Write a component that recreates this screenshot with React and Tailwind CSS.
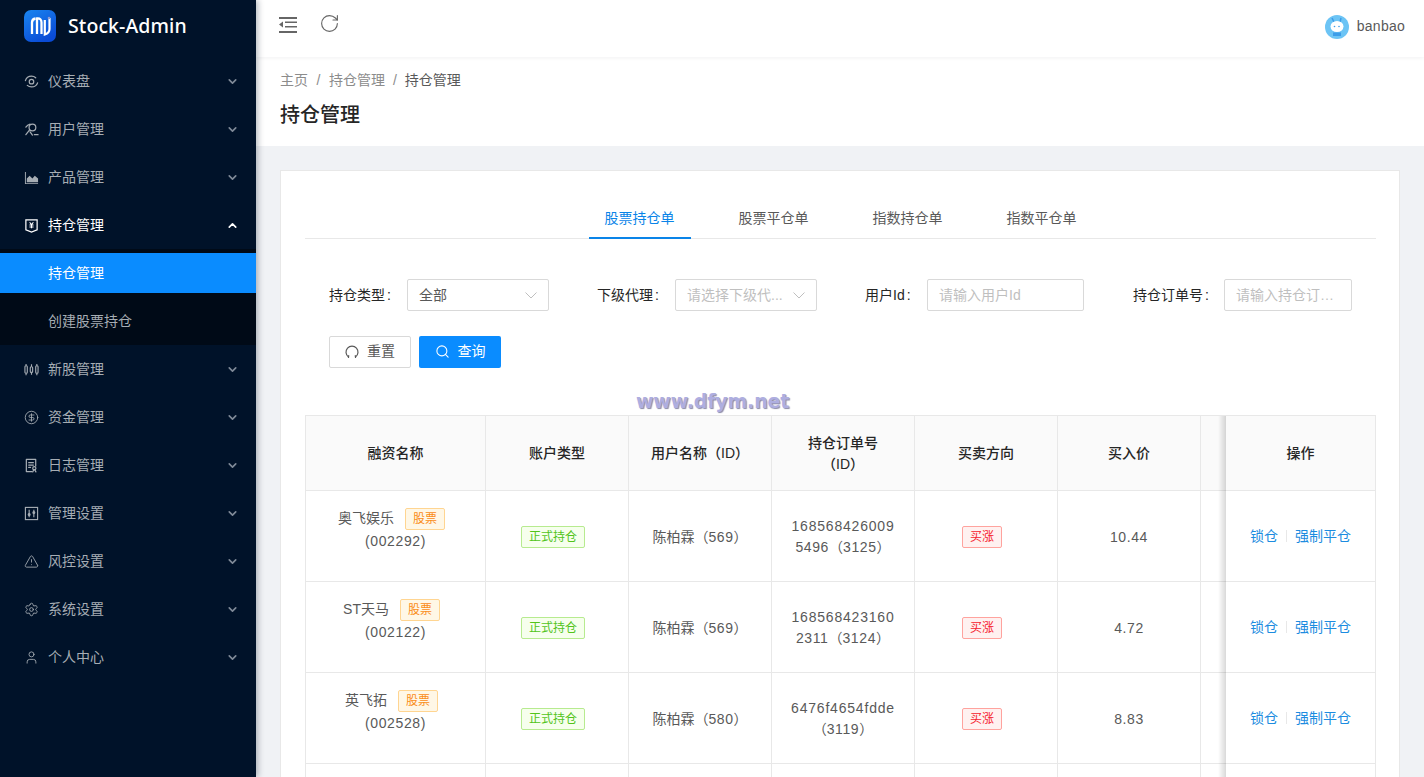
import React from 'react';
import { ChevronDown, ChevronUp, CircleDollarSign, TriangleAlert, Settings, User, RotateCw, Search } from 'lucide-react';

const Svg = ({ children }) => (
  <svg width="15" height="15" viewBox="0 0 16 16" fill="none" stroke="currentColor" strokeWidth="1.3" strokeLinecap="round" strokeLinejoin="round">
    {children}
  </svg>
);

const DashIcon = () => (
  <Svg>
    <circle cx="8" cy="8.2" r="2.4" />
    <path d="M1.500 7C2.500 3.800 5.500 2.300 8 2.300c1.500 0 3.200 .5 4.500 1.700" />
    <path d="M14.500 9.500c-1 3-4 4.300-6.500 4.300-1.500 0-3.200-.5-4.500-1.700" />
  </Svg>
);
const UserSearchIcon = () => (
  <Svg>
    <circle cx="9" cy="5.800" r="3.600" />
    <path d="M6 8.500 2 13.500M6.500 2.300C4.500 2.800 3 4 2 5.500M6.500 10.500l2.500 3.500M11 13.500h4" />
  </Svg>
);
const AreaIcon = () => (
  <svg width="15" height="15" viewBox="0 0 16 16" fill="currentColor">
    <path d="M1 2h1v12h13v1H1z" />
    <path d="M3 13V9l3-3 3 3 2.500-3 3.500 3v4z" />
  </svg>
);
const ShieldIcon = () => (
  <svg width="15" height="15" viewBox="0 0 16 16" fill="none" stroke="currentColor" strokeWidth="1.3">
    <path d="M2 2h12v10.500l-6 2.500-6-2.500z" />
    <path d="M6 4.500l2 2.500 2-2.500M5.800 7.500h4.400M5.800 9.500h4.400M8 7v4" strokeWidth="1.100" />
  </svg>
);
const CandleIcon = () => (
  <svg width="15" height="15" viewBox="0 0 16 16" fill="none" stroke="currentColor" strokeWidth="1.2">
    <rect x="1" y="4" width="2.500" height="8" rx="1" />
    <rect x="6.700" y="5" width="2.500" height="6" rx="1" />
    <rect x="12.500" y="4" width="2.500" height="8" rx="1" />
    <path d="M2.200 2v2M2.200 12v2M8 2.500V5M8 11v2.500M13.700 2v2M13.700 12v2" />
  </svg>
);
const LogIcon = () => (
  <Svg>
    <path d="M8.500 14.500H2.500v-13h10v7" />
    <path d="M5 5h5M5 7.500h5M5 10h2" />
    <circle cx="11" cy="11" r="1.700" />
    <path d="M9.300 14.800l1.200-2.200M12.700 14.800l-1.200-2.200" />
  </Svg>
);
const SlidersIcon = () => (
  <svg width="15" height="15" viewBox="0 0 16 16" fill="none" stroke="currentColor" strokeWidth="1.200">
    <rect x="1.500" y="1.500" width="13" height="13" />
    <path d="M5.500 4v8M10.500 4v8" />
    <circle cx="5.500" cy="9" r="1" fill="currentColor" />
    <circle cx="10.500" cy="7" r="1" fill="currentColor" />
  </svg>
);

const menu = [
  { name: '仪表盘', icon: <DashIcon /> },
  { name: '用户管理', icon: <UserSearchIcon /> },
  { name: '产品管理', icon: <AreaIcon /> },
  { name: '持仓管理', icon: <ShieldIcon />, open: true },
  { name: '新股管理', icon: <CandleIcon /> },
  { name: '资金管理', icon: <CircleDollarSign size={15} strokeWidth={1.4} /> },
  { name: '日志管理', icon: <LogIcon /> },
  { name: '管理设置', icon: <SlidersIcon /> },
  { name: '风控设置', icon: <TriangleAlert size={15} strokeWidth={1.4} /> },
  { name: '系统设置', icon: <Settings size={15} strokeWidth={1.4} /> },
  { name: '个人中心', icon: <User size={15} strokeWidth={1.4} /> },
];

const rows = [
  { name: '奥飞娱乐', code: '(002292)', user: '陈柏霖', uid: '569', order: ['168568426009', '5496', '3125'], price: '10.44' },
  { name: 'ST天马', code: '(002122)', user: '陈柏霖', uid: '569', order: ['168568423160', '2311', '3124'], price: '4.72' },
  { name: '英飞拓', code: '(002528)', user: '陈柏霖', uid: '580', order: ['6476f4654fdde', '', '3119'], price: '8.83' },
  { name: '奥飞娱乐', code: '(002292)', user: '陈柏霖', uid: '569', order: ['168568420011', '2301', '3118'], price: '10.44' },
];

const Num = ({ children }) => <span className="tracking-[0.6px]">{children}</span>;

function Sidebar() {
  return (
    <aside className="w-[256px] shrink-0 h-full bg-[#001229] z-10 shadow-[2px_0_6px_rgba(0,21,41,0.3)]">
      <div className="h-[57px] flex items-center pl-[24px] pb-[5px]">
        <svg width="32" height="32" viewBox="0 0 32 32">
          <defs>
            <linearGradient id="logo" x1="0" y1="0" x2="0.6" y2="1">
              <stop offset="0" stopColor="#1a86f0" />
              <stop offset="1" stopColor="#0a4bd6" />
            </linearGradient>
          </defs>
          <rect width="32" height="32" rx="7" fill="url(#logo)" />
          <path d="M8 24V12.500Q8 9 11.500 8.500M13 24V8.500Q17.500 8 17.500 12.500V24" fill="none" stroke="#fff" strokeWidth="2.300" />
          <path d="M20.800 10V24.500Q25.500 23 25.500 19V8" fill="none" stroke="#fff" strokeWidth="2.200" />
          <circle cx="25" cy="8" r="1.300" fill="#8e9bd0" />
        </svg>
        <span className="ml-[12px] text-[19.5px] font-medium text-white tracking-[0.1px] font-['Noto_Sans',sans-serif]">Stock-Admin</span>
      </div>
      {menu.map((m) => (
        <div key={m.name}>
          <div className={`h-[48px] flex items-center pl-[24px] pr-[17px] ${m.open ? 'text-white' : 'text-[#a6adb4]'}`}>
            <span className="w-[24px] shrink-0 flex">{m.icon}</span>
            <span className="flex-1 text-[14px]">{m.name}</span>
            {m.open
              ? <ChevronUp size={13} strokeWidth={3} className="text-white" />
              : <ChevronDown size={13} strokeWidth={3} className="text-[#7f8a98]" />}
          </div>
          {m.open && (
            <div className="bg-[#000a17] pt-[4px] pb-[4px] text-[14px]">
              <div className="h-[40px] flex items-center pl-[48px] bg-[#0a8cff] text-white">持仓管理</div>
              <div className="h-[40px] mt-[8px] flex items-center pl-[48px] text-[#a6adb4]">创建股票持仓</div>
            </div>
          )}
        </div>
      ))}
    </aside>
  );
}

function Header() {
  return (
    <header className="h-[57px] shrink-0 bg-white flex items-center pl-[23px] pr-[19px] pb-[4px] shadow-[0_1px_4px_rgba(0,21,41,0.06)] z-[5]">
      <svg width="18" height="16" viewBox="0 0 18 16" className="-mt-[3px] text-[#666]" fill="currentColor">
        <rect x="0" y="0" width="18" height="2" />
        <rect x="6" y="4.500" width="12" height="1.500" />
        <rect x="6" y="9" width="12" height="1.500" />
        <rect x="0" y="14" width="18" height="2" />
        <path d="M4 4.500v6l-4-3z" />
      </svg>
      <RotateCw size={21} strokeWidth={1.3} className="ml-[22px] -mt-[7px] text-[#666]" />
      <div className="ml-auto flex items-center">
        <svg width="24" height="24" viewBox="0 0 24 24">
          <circle cx="12" cy="12" r="12" fill="#6cc4f5" />
          <path d="M7 3l2 4M16 3l-1 4" stroke="#3d9de8" strokeWidth="1.500" />
          <ellipse cx="12" cy="11.500" rx="6.500" ry="5.500" fill="#fff" />
          <circle cx="9.500" cy="11.500" r="0.800" fill="#3d9de8" />
          <circle cx="14" cy="11.500" r="0.800" fill="#3d9de8" />
          <path d="M8 17.500h8v3.500H8z" fill="#3d9de8" />
        </svg>
        <span className="ml-[8px] text-[14px] text-[#595959] tracking-[0.25px]">banbao</span>
      </div>
    </header>
  );
}

const tabs = ['股票持仓单', '股票平仓单', '指数持仓单', '指数平仓单'];

function Tabs() {
  return (
    <div className="flex justify-center gap-[32px] border-b border-[#e8e8e8] h-[43px]">
      {tabs.map((t, i) => (
        <div
          key={t}
          className={`px-[16px] pt-[4px] h-[43px] flex items-center text-[14px] border-b-2 ${i === 0 ? 'text-[#0a84e8] border-[#0a84e8]' : 'text-[#595959] border-transparent'}`}
        >
          {t}
        </div>
      ))}
    </div>
  );
}

const Caret = () => (
  <svg width="12" height="7" viewBox="0 0 12 7" fill="none" stroke="#bfbfbf" strokeWidth="1" className="ml-auto">
    <path d="M.5 .5 6 6l5.500-5.500" />
  </svg>
);

function SelectBox({ value, placeholder }) {
  return (
    <div className="w-[142px] h-[32px] border border-[#d9d9d9] rounded-[2px] flex items-center pl-[11px] pr-[11px] text-[14px]">
      {value
        ? <span className="text-[#595959]">{value}</span>
        : <span className="text-[#bfbfbf] whitespace-nowrap">{placeholder}</span>}
      <Caret />
    </div>
  );
}

function TextInput({ placeholder, width }) {
  return (
    <input
      placeholder={placeholder}
      className={`${width} h-[32px] border border-[#d9d9d9] rounded-[2px] px-[11px] text-[14px] text-ellipsis outline-none placeholder:text-[#bfbfbf]`}
    />
  );
}

function Filters() {
  return (
    <div className="pl-[24px]">
      <div className="flex items-center gap-[48px] text-[14px] text-[#262626] mt-[40px]">
        <div className="flex items-center">
          <label className="w-[78px]">持仓类型<span className="ml-[2px]">:</span></label>
          <SelectBox value="全部" />
        </div>
        <div className="flex items-center">
          <label className="w-[78px]">下级代理<span className="ml-[2px]">:</span></label>
          <SelectBox placeholder="请选择下级代..." />
        </div>
        <div className="flex items-center">
          <label className="w-[62px]">用户Id<span className="ml-[2px]">:</span></label>
          <TextInput placeholder="请输入用户Id" width="w-[157px]" />
        </div>
        <div className="flex items-center">
          <label className="w-[91px] ml-px">持仓订单号<span className="ml-[2px]">:</span></label>
          <TextInput placeholder="请输入持仓订单号" width="w-[128px]" />
        </div>
      </div>
      <div className="flex gap-[8px] mt-[25px] text-[14px]">
        <button className="w-[82px] h-[32px] pb-px border border-[#d9d9d9] rounded-[2px] bg-white text-[#595959] flex items-center justify-center gap-[8px]">
          <svg width="14" height="14" viewBox="0 0 14 14" fill="none" stroke="currentColor" strokeWidth="1.200" strokeLinecap="round">
            <path d="M3.500 12A6 6 0 1 1 10.500 12" />
            <path d="M3.500 12.500l.2-1.800M10.500 12.500l-.2-1.800" />
          </svg>
          重置
        </button>
        <button className="w-[82px] h-[32px] pb-px rounded-[2px] bg-[#0a8cff] text-white flex items-center justify-center gap-[8px]">
          <Search size={15} strokeWidth={1.7} />
          查询
        </button>
      </div>
    </div>
  );
}

const Tag = ({ className, children }) => (
  <span className={`inline-block h-[22px] leading-[20px] px-[7px] mr-[8px] border rounded-[2px] text-[12px] ${className}`}>{children}</span>
);

const thClass = 'bg-[#fafafa] border-r border-b border-[#e8e8e8] font-medium text-[#262626] text-[14px] leading-[21px] text-center';
const tdClass = 'border-r border-b border-[#e8e8e8] text-[14px] text-[#595959] text-center align-middle';
// left edge of the pinned column fades out over the scrolled cells
const fixedClass = "sticky right-0 w-[150px] min-w-[150px] before:content-[''] before:absolute before:top-0 before:bottom-[-1px] before:left-[-8px] before:w-[8px] before:bg-gradient-to-l before:from-black/15 before:to-transparent";

function PositionTable() {
  return (
    <div className="mt-[47px] overflow-hidden border-l border-t border-[#e8e8e8]">
      <table className="border-separate border-spacing-0 table-fixed w-[1188px]">
        <thead>
          <tr className="h-[75px]">
            <th className={`${thClass} w-[180px]`}>融资名称</th>
            <th className={`${thClass} w-[143px]`}>账户类型</th>
            <th className={`${thClass} w-[143px]`}>用户名称（ID）</th>
            <th className={`${thClass} w-[143px] pt-[2px]`}>持仓订单号<br />（ID）</th>
            <th className={`${thClass} w-[143px]`}>买卖方向</th>
            <th className={`${thClass} w-[143px]`}>买入价</th>
            <th className={`${thClass} w-[143px]`}>现价</th>
            <th className={`${thClass} ${fixedClass}`}>操作</th>
          </tr>
        </thead>
        <tbody>
          {rows.map((r) => (
            <tr key={r.order[0]} className="h-[91px]">
              <td className={tdClass}>
                <div className="pb-[14px] leading-[22px]">
                  <div>{r.name}<Tag className="ml-[11px] bg-[#fff7e6] border-[#ffd591] text-[#fa8c16]">股票</Tag></div>
                  <Num>{r.code}</Num>
                </div>
              </td>
              <td className={tdClass}><Tag className="align-middle mt-[2px] bg-[#f6ffed] border-[#b7eb8f] text-[#52c41a]">正式持仓</Tag></td>
              <td className={`${tdClass} pt-[2px]`}>{r.user}（<Num>{r.uid}</Num>）</td>
              <td className={`${tdClass} pt-[2px] leading-[21px]`}>
                <span className="tracking-[0.8px]">{r.order[0]}</span><br />
                <Num>{r.order[1]}</Num>（<Num>{r.order[2]}</Num>）
              </td>
              <td className={tdClass}><Tag className="align-middle mt-[2px] bg-[#fff1f0] border-[#ffa39e] text-[#f5222d]">买涨</Tag></td>
              <td className={`${tdClass} pt-[2px]`}><Num>{r.price}</Num></td>
              <td className={tdClass}></td>
              <td className={`${tdClass} ${fixedClass} bg-white`}>
                <a className="text-[#1c8ce0]">锁仓</a>
                <span className="inline-block w-px h-[12px] bg-[#e8e8e8] mx-[8px] align-[-1px]" />
                <a className="text-[#1c8ce0]">强制平仓</a>
              </td>
            </tr>
          ))}
        </tbody>
      </table>
    </div>
  );
}

export default function App() {
  return (
    <div className="relative flex h-screen overflow-hidden bg-[#f0f2f5] font-['Liberation_Sans','Noto_Sans_CJK_SC',sans-serif]">
      <Sidebar />
      <div className="flex-1 min-w-0 flex flex-col h-full">
        <Header />
        <div className="h-[89px] shrink-0 bg-white pl-[24px] pt-[13px]">
          <div className="text-[14px] leading-[20px] text-[#8c8c8c]">
            主页<span className="mx-[8.5px]">/</span>持仓管理<span className="mx-[8px]">/</span><span className="text-[#595959]">持仓管理</span>
          </div>
          <h1 className="mt-[11px] text-[20px] leading-[28px] font-medium text-[#262626]">持仓管理</h1>
        </div>
        <main className="flex-1 min-h-0 p-[24px]">
          <div className="bg-white border border-[#e8e8e8] pl-[24px] pr-[23px] pt-[25px] pb-[24px]">
            <Tabs />
            <Filters />
            <PositionTable />
          </div>
        </main>
      </div>
      {/* site watermark baked into the screenshot */}
      <div className="absolute left-[636px] top-[389px] text-[19px] leading-[24px] font-bold text-[#aeaee0] font-['DejaVu_Sans',sans-serif] tracking-[-0.2px] [text-shadow:1px_1px_1px_#8a8aa8]">
        www.dfym.net
      </div>
    </div>
  );
}
